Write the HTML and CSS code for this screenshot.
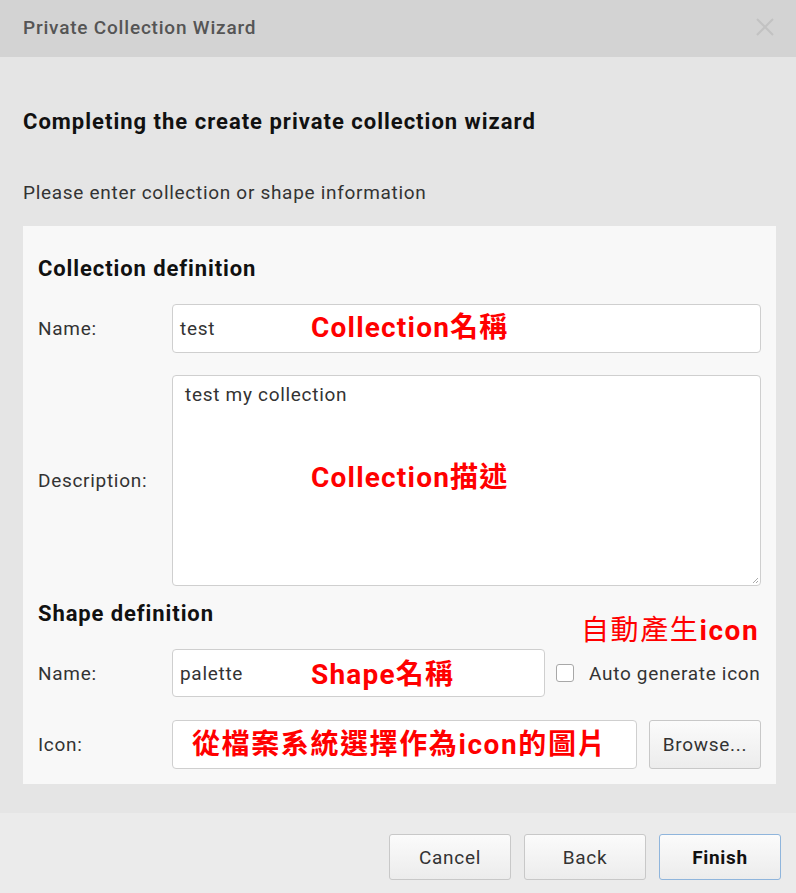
FILE: index.html
```html
<!DOCTYPE html>
<html lang="zh-Hant">
<head>
<meta charset="utf-8">
<title>Private Collection Wizard</title>
<link rel="stylesheet" href="styles.css">
</head>
<body>
<div class="dialog">
  <div class="titlebar">
    <span class="title">Private Collection Wizard</span>
    <span class="close">
      <svg width="20" height="20" viewBox="0 0 20 20"><path d="M2 2 L18 18 M18 2 L2 18" stroke="#c2c2c2" stroke-width="2" fill="none"/></svg>
    </span>
  </div>
  <div class="content">
    <h1 class="heading">Completing the create private collection wizard</h1>
    <p class="intro">Please enter collection or shape information</p>
    <div class="panel">
      <h2 class="section">Collection definition</h2>
      <div class="row">
        <label class="label">Name:</label>
        <div class="field input">test<span class="note note-name">Collection名稱</span></div>
      </div>
      <div class="row row-desc">
        <label class="label">Description:</label>
        <div class="field textarea">test my collection<span class="note note-desc">Collection描述</span>
          <svg class="grip" width="8" height="8" viewBox="0 0 8 8"><path d="M7 2 L2 7 M7 5 L5 7" stroke="#aaa" stroke-width="1"/></svg>
        </div>
      </div>
      <h2 class="section section-shape">Shape definition<span class="note note-auto">自動產生<b>icon</b></span></h2>
      <div class="row">
        <label class="label">Name:</label>
        <div class="field input shape-name">palette<span class="note note-shape">Shape名稱</span></div>
        <span class="checkbox"></span>
        <span class="check-label">Auto generate icon</span>
      </div>
      <div class="row">
        <label class="label">Icon:</label>
        <div class="field input icon-field"><span class="note note-icon">從檔案系統選擇作為icon的圖片</span></div>
        <button class="btn browse">Browse...</button>
      </div>
    </div>
  </div>
  <div class="footer">
    <button class="btn action">Cancel</button>
    <button class="btn action">Back</button>
    <button class="btn action primary">Finish</button>
  </div>
</div>
</body>
</html>
```

FILE: styles.css
```css
* { box-sizing: border-box; }
html, body { margin: 0; padding: 0; }
body {
  width: 796px;
  height: 893px;
  font-family: Roboto, "Noto Sans CJK TC", sans-serif;
  background: #e5e5e5;
  color: #333;
}
.dialog {
  display: flex;
  flex-direction: column;
  height: 893px;
}
.titlebar {
  height: 57px;
  background: #d3d3d3;
  display: flex;
  align-items: center;
  justify-content: space-between;
  padding: 0 21px 0 23px;
}
.title {
  font-size: 19px;
  font-weight: 500;
  color: #555;
  letter-spacing: 0.8px;
  padding-bottom: 2px;
}
.close { display: flex; padding-bottom: 4px; }
.content {
  background: #e5e5e5;
  padding: 53px 20px 29px 23px;
}
.heading {
  margin: 0;
  font-size: 22px;
  line-height: 24px;
  font-weight: 700;
  color: #111;
  letter-spacing: 1px;
}
.intro {
  margin: 48px 0 0;
  font-size: 19px;
  line-height: 22px;
  color: #333;
  letter-spacing: 0.7px;
}
.panel {
  margin-top: 22px;
  background: #f8f8f8;
  padding: 31px 15px 15px 15px;
  width: 753px;
}
.section {
  margin: 0;
  font-size: 22px;
  line-height: 24px;
  font-weight: 700;
  color: #111;
  position: relative;
  letter-spacing: 0.9px;
}
.section-shape { margin-top: 16px; }
.row {
  display: flex;
  align-items: center;
  margin-top: 23px;
}
.row-desc { margin-top: 22px; }
.label {
  width: 134px;
  flex: none;
  font-size: 19px;
  letter-spacing: 0.7px;
  color: #333;
}
.field {
  position: relative;
  background: #fff;
  border: 1px solid #cfcfcf;
  border-radius: 4px;
  font-size: 19px;
  letter-spacing: 0.7px;
  color: #333;
}
.input {
  flex: 1;
  height: 49px;
  display: flex;
  align-items: center;
  padding-left: 7px;
}
.textarea {
  flex: 1;
  height: 211px;
  padding: 7px 12px;
  line-height: 24px;
}
.grip { position: absolute; right: 1px; bottom: 1px; }
.shape-name { flex: none; width: 373px; height: 48px; }
.icon-field { flex: none; width: 465px; height: 49px; }
.checkbox {
  width: 18px;
  height: 18px;
  margin-left: 11px;
  border: 1px solid #a8a8a8;
  border-radius: 3px;
  background: #fff;
}
.check-label {
  margin-left: 15px;
  font-size: 19px;
  letter-spacing: 0.7px;
  color: #333;
  white-space: nowrap;
}
.btn {
  font-family: Roboto, sans-serif;
  font-size: 19px;
  letter-spacing: 0.7px;
  color: #333;
  background: linear-gradient(#fbfbfb, #ececec);
  border: 1px solid #c8c8c8;
  border-radius: 3px;
  cursor: pointer;
}
.browse {
  margin-left: 12px;
  width: 112px;
  height: 49px;
  padding: 0;
}
.footer {
  flex: 1;
  background: #ebebeb;
  display: flex;
  justify-content: flex-end;
  align-items: flex-start;
  padding: 21px 15px 0 0;
  gap: 13px;
}
.action {
  width: 122px;
  height: 46px;
}
.primary {
  font-weight: 700;
  color: #111;
  border-color: #8fb5dc;
}
.note {
  position: absolute;
  color: #f00;
  font-family: Roboto, "Noto Sans CJK TC", sans-serif;
  font-weight: 700;
  font-size: 28px;
  line-height: 30px;
  white-space: nowrap;
  letter-spacing: 1.2px;
}
.note-name { left: 138px; top: 8px; }
.note-desc { left: 138px; top: 87px; }
.note-shape { left: 138px; top: 10px; }
.note-icon { left: 19px; top: 9px; letter-spacing: 1.6px; }
.note-auto { left: 543px; top: 14px; font-weight: 400; letter-spacing: 1.6px; }
.note-auto b { font-weight: 700; }
```
